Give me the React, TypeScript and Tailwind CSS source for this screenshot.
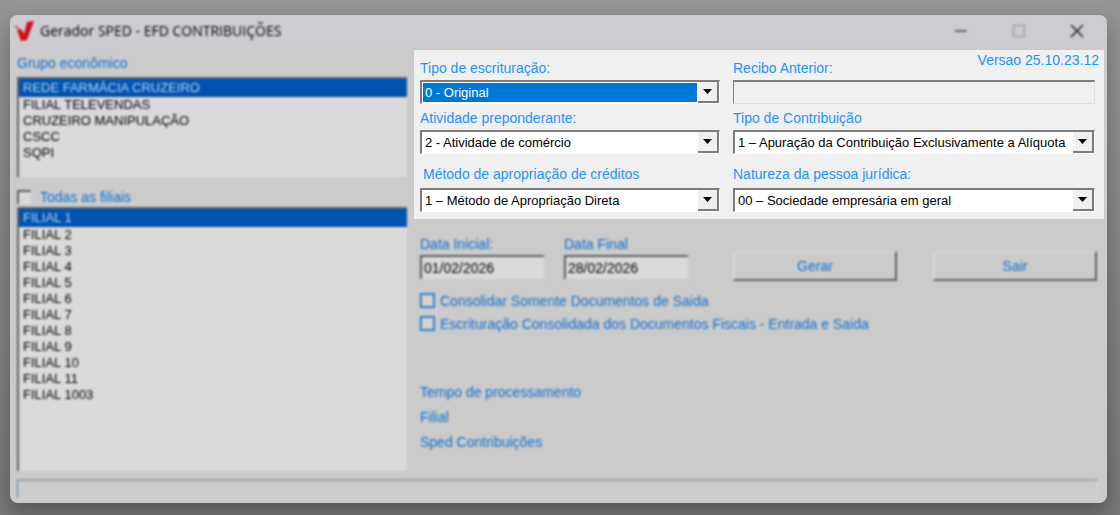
import { useState } from 'react';
import type { ReactNode } from 'react';

const GROUPS = ['REDE FARMÁCIA CRUZEIRO', 'FILIAL TELEVENDAS', 'CRUZEIRO MANIPULAÇÃO', 'CSCC', 'SQPI'];
const BRANCHES = [1, 2, 3, 4, 5, 6, 7, 8, 9, 10, 11, 1003].map((n) => `FILIAL ${n}`);

function Logo() {
  return (
    <svg width="20" height="20" viewBox="0 0 20 20" aria-hidden="true" className="shrink-0">
      <path d="M3 9 L7 8 L10 13 L13 1 L20 0 L13 19 L7 20 Z" fill="#cf0f14" />
      <path d="M1 5 L3 6 M3 7 L5 8" stroke="#d4606a" strokeWidth="2" />
    </svg>
  );
}

function ListBox({ label, items, className }: { label: string; items: string[]; className: string }) {
  const [selected, setSelected] = useState(items[0]);

  return (
    <div
      role="listbox"
      aria-label={label}
      className={`flex flex-col border-t-2 border-l-2 border-[#606060] bg-[#dadada] text-[13px] ${className}`}
    >
      {items.map((item) => (
        <button
          key={item}
          role="option"
          aria-selected={item === selected}
          onClick={() => setSelected(item)}
          className={`shrink-0 px-1 text-left ${
            item === selected ? 'h-[18px] bg-[#0053b0] leading-[18px] text-[#b4d4f4]' : 'h-4 leading-4 text-black'
          }`}
        >
          {item}
        </button>
      ))}
    </div>
  );
}

function Combo({ id, value, active = false }: { id: string; value: string; active?: boolean }) {
  return (
    <div className="mt-[2px] flex h-6 border border-t-2 border-l-2 border-t-[#7c7c7c] border-r-white border-b-white border-l-[#7c7c7c] bg-white">
      <select
        id={id}
        defaultValue={value}
        className={`min-w-0 flex-1 appearance-none overflow-hidden text-[13px] text-clip outline-none ${
          active ? 'm-px bg-[#0078d7] pl-[2px] text-white' : 'bg-white pl-[3px] text-black'
        }`}
      >
        <option>{value}</option>
      </select>
      <span
        aria-hidden="true"
        className="pointer-events-none flex w-[21px] shrink-0 items-center justify-center border-r-2 border-b-2 border-[#7c7c7c] bg-[#f0f0f0]"
      >
        <svg width="9" height="5" viewBox="0 0 9 5">
          <path d="M0 0 H9 L4.5 5 Z" fill="#000" />
        </svg>
      </span>
    </div>
  );
}

function DateField({ id, label, value }: { id: string; label: string; value: string }) {
  return (
    <div className="flex w-[124px] flex-col">
      <label htmlFor={id} className="h-5 leading-5">
        {label}
      </label>
      <input
        id={id}
        defaultValue={value}
        className="mt-px h-6 w-full border-t-2 border-l-2 border-[#606060] bg-[#dadada] pl-[2px] text-black outline-none"
      />
    </div>
  );
}

function FlatCheck({ id, children }: { id: string; children: ReactNode }) {
  return (
    <div className="flex h-[23px] items-center gap-[5px]">
      <input
        id={id}
        type="checkbox"
        className="size-[15px] shrink-0 appearance-none border-2 border-[#2f80d0] bg-[#d4d4d4] checked:bg-[#2f80d0]"
      />
      <label htmlFor={id}>{children}</label>
    </div>
  );
}

function ActionButton({ children }: { children: ReactNode }) {
  return (
    <button className="h-[30px] w-[164px] border-2 border-t-[#d6d6d6] border-r-[#606060] border-b-[#606060] border-l-[#d6d6d6]">
      {children}
    </button>
  );
}

export default function App() {
  return (
    <div className="flex min-h-screen bg-linear-to-b from-[#959595] to-[#787878] pt-[15px] pr-[13px] pb-3 pl-[10px] font-['Liberation_Sans',Arial,sans-serif] text-[14px] leading-5">
      <main className="flex flex-1 flex-col overflow-hidden rounded-lg bg-[#cbcbcb] shadow-[0_10px_22px_rgba(0,0,0,0.3)]">
        <header className="flex h-8 shrink-0 items-center bg-[#cfcbd3] pr-[23px] pl-1 text-black blur-[1px]">
          <Logo />
          <h1 className="ml-[6px] flex-1 font-['Open_Sans',sans-serif] text-[14px]">Gerador SPED - EFD CONTRIBUIÇÕES</h1>
          <div className="flex items-center gap-[44px]">
            <button aria-label="Minimizar">
              <svg width="14" height="14" viewBox="0 0 14 14">
                <path d="M1 7 H13" stroke="#444" strokeWidth="1.5" />
              </svg>
            </button>
            <button aria-label="Maximizar" disabled>
              <svg width="14" height="14" viewBox="0 0 14 14">
                <rect x="1.5" y="1.5" width="11" height="11" fill="none" stroke="#a5a2a8" strokeWidth="1.5" />
              </svg>
            </button>
            <button aria-label="Fechar">
              <svg width="14" height="14" viewBox="0 0 14 14">
                <path d="M1 1 L13 13 M13 1 L1 13" stroke="#2c2c2c" strokeWidth="1.7" />
              </svg>
            </button>
          </div>
        </header>

        <div className="grid flex-1 grid-cols-[390fr_690fr] gap-[7px] pr-[3px] pl-[7px] text-[#0f6fd0]">
          <section className="flex flex-col pt-[6px] blur-[1px]">
            <h2 className="h-5">Grupo econômico</h2>
            <ListBox label="Grupo econômico" items={GROUPS} className="mt-1 h-[100px]" />
            <div className="mt-[10px] flex h-5 items-center gap-[9px]">
              <input
                id="todas"
                type="checkbox"
                className="size-[14px] appearance-none border-t-2 border-l-2 border-[#606060] bg-[#dadada] checked:bg-[#2478cf]"
              />
              <label htmlFor="todas">Todas as filiais</label>
            </div>
            <ListBox label="Filiais" items={BRANCHES} className="min-h-[264px] flex-1" />
          </section>

          <div className="flex flex-col pt-[3px]">
            <section className="grid grid-cols-[300fr_362fr] gap-[13px] bg-[#f0f0f0] pr-[9px] pb-[7px] pl-[6px] text-[#1e90ff]">
              <div className="flex min-w-0 flex-col">
                <label htmlFor="escrituracao" className="flex h-7 items-end">
                  Tipo de escrituração:
                </label>
                <Combo id="escrituracao" value="0 - Original" active />
                <label htmlFor="atividade" className="mt-1 h-5">
                  Atividade preponderante:
                </label>
                <Combo id="atividade" value="2 - Atividade de comércio" />
                <label htmlFor="metodo" className="mt-2 flex h-6 items-center pl-[3px]">
                  Método de apropriação de créditos
                </label>
                <Combo id="metodo" value="1 – Método de Apropriação Direta" />
              </div>
              <div className="flex min-w-0 flex-col">
                <div className="-mr-1 flex h-7 items-end justify-between">
                  <label htmlFor="recibo">Recibo Anterior:</label>
                  <span className="self-start">Versao 25.10.23.12</span>
                </div>
                <input
                  id="recibo"
                  className="mt-[2px] h-6 w-full border border-t-2 border-t-[#7c7c7c] border-r-[#dedede] border-b-[#dedede] border-l-[#7c7c7c] bg-[#f0f0f0] pl-1 text-black outline-none"
                />
                <label htmlFor="tipo" className="mt-1 h-5">
                  Tipo de Contribuição
                </label>
                <Combo id="tipo" value="1 – Apuração da Contribuição Exclusivamente a Alíquota" />
                <label htmlFor="natureza" className="mt-2 flex h-6 items-center">
                  Natureza da pessoa jurídica:
                </label>
                <Combo id="natureza" value="00 – Sociedade empresária em geral" />
              </div>
            </section>

            <section className="mt-[15px] flex flex-col pr-[7px] pl-[6px] blur-[1px]">
              <div className="grid grid-cols-[300fr_364fr] gap-[13px]">
                <div className="flex gap-5">
                  <DateField id="inicial" label="Data Inicial:" value="01/02/2026" />
                  <DateField id="final" label="Data Final" value="28/02/2026" />
                </div>
                <div className="flex justify-between pt-[17px]">
                  <ActionButton>Gerar</ActionButton>
                  <ActionButton>Sair</ActionButton>
                </div>
              </div>
              <div className="mt-2 flex flex-col">
                <FlatCheck id="saida">Consolidar Somente Documentos de Saida</FlatCheck>
                <FlatCheck id="entrada">Escrituração Consolidada dos Documentos Fiscais - Entrada e Saida</FlatCheck>
              </div>
              <div className="mt-[47px] flex flex-col gap-[5px]">
                <p>Tempo de processamento</p>
                <p>Filial</p>
                <p>Sped Contribuições</p>
              </div>
            </section>
          </div>
        </div>

        <footer className="mt-2 pr-[9px] pb-[5px] pl-[7px] blur-[1px]">
          <div className="h-[19px] border border-t-2 border-t-[#a2a2a2] border-r-[#d8d8d8] border-b-[#d8d8d8] border-l-[#5a6fc8]" />
        </footer>
      </main>
    </div>
  );
}
